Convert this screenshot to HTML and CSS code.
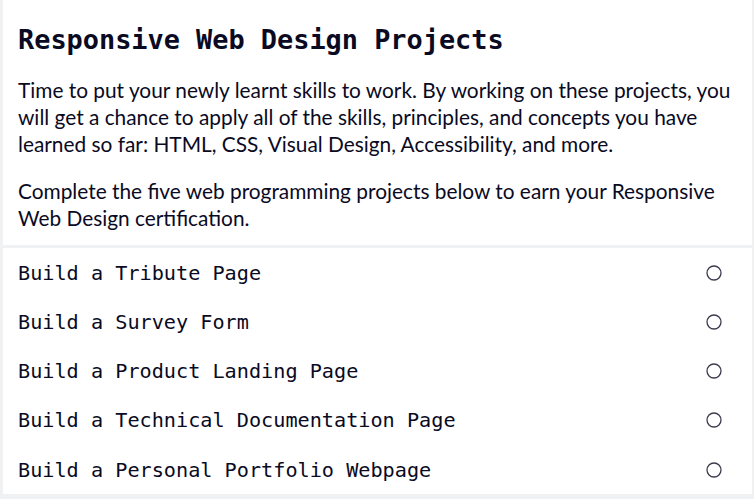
FILE: index.html
```html
<!DOCTYPE html>
<html lang="en">
<head>
<meta charset="utf-8">
<title>Responsive Web Design Projects</title>
<link rel="stylesheet" href="styles.css">
</head>
<body>
<main class="page">
  <section class="intro">
    <h2 class="title">Responsive Web Design Projects</h2>
    <p class="desc">Time to put your newly learnt skills to work. By working on these projects, you will get a chance to apply all of the skills, principles, and concepts you have learned so far: HTML, CSS, Visual Design, Accessibility, and more.</p>
    <p class="desc">Complete the five web programming projects below to earn your Responsive Web Design certification.</p>
  </section>
  <ul class="projects">
    <li class="project"><span class="project-name">Build a Tribute Page</span><svg class="check" viewBox="0 0 16 16" width="16" height="16"><circle cx="8" cy="8" r="7" /></svg></li>
    <li class="project"><span class="project-name">Build a Survey Form</span><svg class="check" viewBox="0 0 16 16" width="16" height="16"><circle cx="8" cy="8" r="7" /></svg></li>
    <li class="project"><span class="project-name">Build a Product Landing Page</span><svg class="check" viewBox="0 0 16 16" width="16" height="16"><circle cx="8" cy="8" r="7" /></svg></li>
    <li class="project"><span class="project-name">Build a Technical Documentation Page</span><svg class="check" viewBox="0 0 16 16" width="16" height="16"><circle cx="8" cy="8" r="7" /></svg></li>
    <li class="project"><span class="project-name">Build a Personal Portfolio Webpage</span><svg class="check" viewBox="0 0 16 16" width="16" height="16"><circle cx="8" cy="8" r="7" /></svg></li>
  </ul>
</main>
</body>
</html>
```

FILE: styles.css
```css
html, body {
  margin: 0;
  padding: 0;
  background: #f0f1f3;
}

body {
  color: #0a0a23;
  font-family: "Lato", "Liberation Sans", sans-serif;
}

.page {
  padding: 0 2px 0 3px;
  display: flex;
  flex-direction: column;
  gap: 3px;
}

.intro {
  background: #ffffff;
  padding: 24px 15px 0;
  height: 245px;
  box-sizing: border-box;
}

.title {
  margin: 0;
  font-family: "DejaVu Sans Mono", "Liberation Mono", monospace;
  font-weight: bold;
  font-size: 26.9px;
  line-height: 32px;
  letter-spacing: 0;
}

.desc {
  margin: 20px 0 0;
  font-size: 20.85px;
  line-height: 27px;
}

.projects {
  list-style: none;
  margin: 0;
  padding: 0;
  background: #ffffff;
}

.project {
  height: 49.25px;
  display: flex;
  align-items: center;
  justify-content: space-between;
  padding: 0 30px 0 15px;
}

.project-name {
  font-family: "DejaVu Sans Mono", "Liberation Mono", monospace;
  font-size: 20.2px;
  line-height: 24px;
}

.check {
  display: block;
  fill: none;
  stroke: #3b3b4f;
  stroke-width: 1.3;
}
```
